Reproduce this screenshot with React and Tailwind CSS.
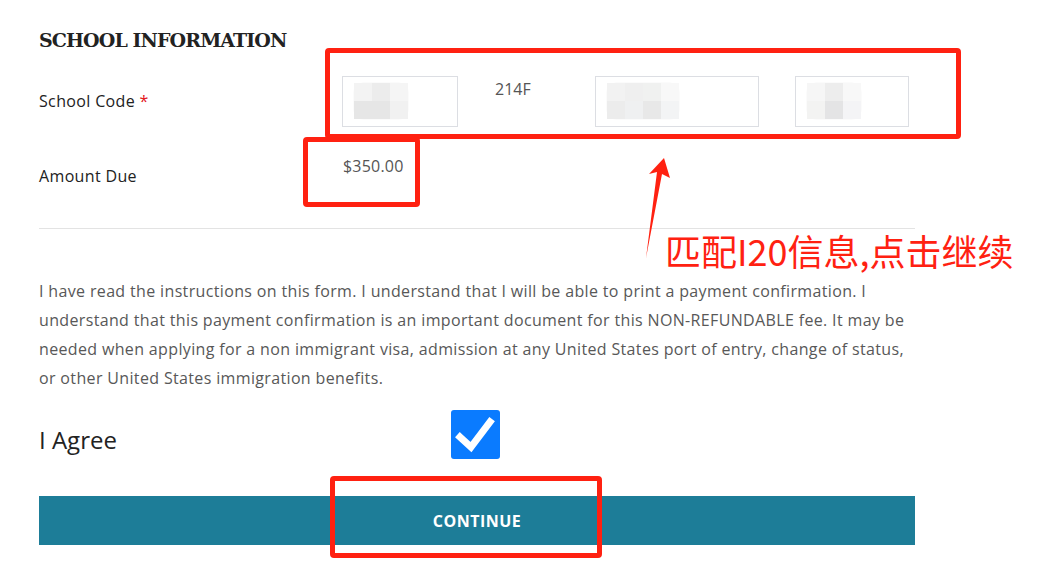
import React from "react";

const sans = { fontFamily: '"Open Sans", "Noto Sans", sans-serif' };

/* blurred-out field value, as in the screenshot */
function Blur({ cells }) {
  return (
    <div className="absolute left-[10px] top-[5px] rounded-xl bg-[#fbfbfb] p-[1px]">
      {cells.map((row, i) => (
        <div key={i} className="flex">
          {row.map((c, j) => (
            <div key={j} className="h-[18px] w-[18px]" style={{ background: c }} />
          ))}
        </div>
      ))}
    </div>
  );
}

function Field({ width, cells }) {
  return (
    <div
      className="relative h-[51px] shrink-0 border border-[#dcdee3] bg-white"
      style={{ width }}
    >
      <Blur cells={cells} />
    </div>
  );
}

export default function App() {
  return (
    <div className="relative min-h-screen bg-white text-[#222]" style={sans}>
      <div className="w-[876px] ml-[39px] pt-[26px]">
        {/* Heading */}
        <h2
          className="text-[19px] leading-[28px] font-bold text-[#222] tracking-[-0.9px]"
          style={{ fontFamily: '"DejaVu Serif", "Liberation Serif", serif' }}
        >
          SCHOOL INFORMATION
        </h2>

        {/* School code row */}
        <div className="flex items-start mt-[22px]">
          <div className="w-[303px] shrink-0 pt-[13px] text-[16px] leading-[24px] tracking-[0.35px]">
            School Code <span className="text-[#e3141b]">*</span>
          </div>
          <Field
            width={116}
            cells={[
              ["#f3f3f3", "#ececec", "#f5f5f5"],
              ["#e6e6e6", "#e6e6e6", "#f1f1f1"],
            ]}
          />
          <div className="w-[137px] shrink-0 pl-[37px] pt-[1px] text-[16px] leading-[24px] text-[#555]">
            214F
          </div>
          <Field
            width={164}
            cells={[
              ["#f2f2f2", "#efefef", "#f0f1f0", "#f8f8f8"],
              ["#ececec", "#eff0f1", "#e8e8e8", "#f3f4f5"],
            ]}
          />
          <div className="w-[36px] shrink-0" />
          <Field
            width={114}
            cells={[
              ["#f6f6f6", "#ededed", "#f8f8f8"],
              ["#f3f3f2", "#e4e4e5", "#f4f4f6"],
            ]}
          />
        </div>

        {/* Amount due row */}
        <div className="flex items-start mt-[27px]">
          <div className="w-[303px] shrink-0 pt-[10px] text-[16px] leading-[24px] tracking-[0.35px]">
            Amount Due
          </div>
          <div className="pl-[1px] text-[16px] leading-[24px] text-[#555] tracking-[0.2px]">$350.00</div>
        </div>

        <div className="mt-[40px] h-px bg-[#e3e3e3]" />

        {/* Notice */}
        <p className="mt-[48px] text-[16px] leading-[29px] text-[#585858] tracking-[0.35px] pr-[6px]">
          I have read the instructions on this form. I understand that I will be able to print a
          payment confirmation. I understand that this payment confirmation is an important
          document for this NON-REFUNDABLE fee. It may be needed when applying for a non immigrant
          visa, admission at any United States port of entry, change of status, or other United
          States immigration benefits.
        </p>

        {/* Agree */}
        <div className="flex items-start mt-[17px]">
          <div className="w-[412px] shrink-0 pt-[14px] text-[24px] leading-[32px] text-[#222]">
            I Agree
          </div>
          <div className="flex h-[49px] w-[49px] items-center justify-center rounded-[3px] bg-[#0a7bff]">
            <svg width="49" height="49" viewBox="0 0 49 49">
              <path
                d="M9 27 L20 37 L39 12"
                fill="none"
                stroke="#fff"
                strokeWidth="7"
                strokeLinecap="square"
                strokeLinejoin="miter"
              />
            </svg>
          </div>
        </div>

        {/* Continue */}
        <button className="mt-[37px] flex h-[49px] w-full items-center justify-center bg-[#1d7d98] text-[16px] font-bold tracking-[0.5px] text-white">
          CONTINUE
        </button>
      </div>

      {/* Annotations drawn over the page */}
      <div className="absolute left-[325px] top-[48px] h-[91px] w-[636px] rounded-[4px] border-[5px] border-[#ff2111]" />
      <div className="absolute left-[303px] top-[137px] h-[70px] w-[117px] rounded-[4px] border-[5px] border-[#ff2111]" />
      <div className="absolute left-[330px] top-[476px] h-[82px] w-[272px] rounded-[4px] border-[5px] border-[#ff2111]" />
      <svg className="absolute left-0 top-0" width="1049" height="562">
        <polygon
          points="664,158 670,178 662,174 646,258 657,172 649,174"
          fill="#ff2111"
        />
      </svg>
      <div
        className="absolute left-[665px] top-[228px] whitespace-nowrap text-[36px] leading-[44px] text-[#ff2111]"
        style={{ fontFamily: '"Noto Sans CJK SC", "Noto Sans", sans-serif' }}
      >
        匹配I20信息,点击继续
      </div>
    </div>
  );
}
